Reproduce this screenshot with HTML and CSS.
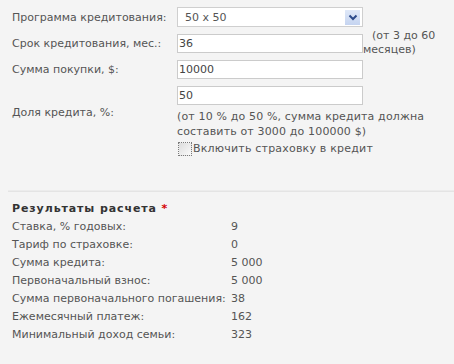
FILE: index.html
```html
<!DOCTYPE html>
<html lang="ru">
<head>
<meta charset="utf-8">
<link rel="stylesheet" href="styles.css">
</head>
<body>
<div class="page">
  <div class="form">
    <div class="row">
      <div class="label">Программа кредитования:</div>
      <div class="select"><span class="select-text">50 x 50</span><span class="arrow"><svg width="10" height="7" viewBox="0 0 10 7"><path d="M1.5 1.5 L5 5 L8.5 1.5" fill="none" stroke="#2c4a8a" stroke-width="2"/></svg></span></div>
    </div>
    <div class="row">
      <div class="label">Срок кредитования, мес.:</div>
      <div class="input">36</div>
      <div class="note">(от 3 до 60<br>месяцев)</div>
    </div>
    <div class="row">
      <div class="label">Сумма покупки, $:</div>
      <div class="input">10000</div>
    </div>
    <div class="row row-share">
      <div class="label">Доля кредита, %:</div>
      <div class="share">
        <div class="input">50</div>
        <div class="help">(от 10 % до 50 %, сумма кредита должна<br>составить от 3000 до 100000 $)</div>
      </div>
    </div>
    <div class="row row-check">
      <div class="label"></div>
      <label class="check"><span class="box"></span>Включить страховку в кредит</label>
    </div>
  </div>
  <div class="sep"></div>
  <div class="results">
    <div class="title">Результаты расчета <span class="star">*</span></div>
    <div class="res-grid">
      <div>Ставка, % годовых:</div><div>9</div>
      <div>Тариф по страховке:</div><div>0</div>
      <div>Сумма кредита:</div><div>5 000</div>
      <div>Первоначальный взнос:</div><div>5 000</div>
      <div>Сумма первоначального погашения:</div><div>38</div>
      <div>Ежемесячный платеж:</div><div>162</div>
      <div>Минимальный доход семьи:</div><div>323</div>
    </div>
  </div>
</div>
</body>
</html>
```
FILE: styles.css
```css
html, body {
  margin: 0;
  padding: 0;
  background: #f4f4f4;
}
body {
  font-family: "DejaVu Sans", Tahoma, sans-serif;
  font-size: 11px;
  color: #555;
  width: 454px;
  height: 364px;
  overflow: hidden;
}
.page {
  padding-top: 4px;
}
.form {
  display: flex;
  flex-direction: column;
}
.row {
  display: flex;
  align-items: center;
  height: 26px;
}
.label {
  width: 177px;
  padding-left: 12px;
  flex: none;
  box-sizing: border-box;
  white-space: nowrap;
}
.select {
  width: 186px;
  height: 20px;
  box-sizing: border-box;
  border: 1px solid #cfcfcf;
  background: #fff;
  display: flex;
  align-items: center;
  justify-content: space-between;
  padding: 0 1px 0 7px;
  color: #555;
}
.arrow {
  width: 15px;
  height: 15px;
  background: linear-gradient(#dfe8f8, #c5d4f0);
  display: flex;
  align-items: center;
  justify-content: center;
  margin-right: 1px;
}
.input {
  width: 186px;
  height: 19px;
  box-sizing: border-box;
  border: 1px solid #cbcbcb;
  background: #fff;
  padding-left: 1px;
  line-height: 17px;
  color: #444;
  flex: none;
}
.note {
  line-height: 14px;
  text-indent: 9px;
  white-space: nowrap;
}
.row-share {
  height: auto;
  align-items: center;
  padding-top: 4px;
}
.share {
  display: flex;
  flex-direction: column;
}
.help {
  line-height: 15px;
  margin-top: 4px;
  white-space: nowrap;
  letter-spacing: 0.15px;
}
.row-check {
  height: 19px;
}
.check {
  display: flex;
  align-items: center;
  margin-left: 1px;
  letter-spacing: 0.2px;
}
.box {
  width: 12px;
  height: 12px;
  border: 1px dotted #7a7a7a;
  background: linear-gradient(135deg, #dcdcdc, #fafafa);
  margin-right: 1px;
}
.sep {
  margin: 32px 0 0 8px;
  height: 1px;
  background: #e4e4e4;
  border-top: 1px solid #ececec;
}
.results {
  padding: 8px 0 0 12px;
}
.title {
  font-weight: bold;
  color: #333;
  line-height: 18px;
  letter-spacing: 0.9px;
}
.star {
  color: #d40000;
}
.res-grid {
  display: grid;
  grid-template-columns: 219px auto;
  line-height: 18px;
}
```
